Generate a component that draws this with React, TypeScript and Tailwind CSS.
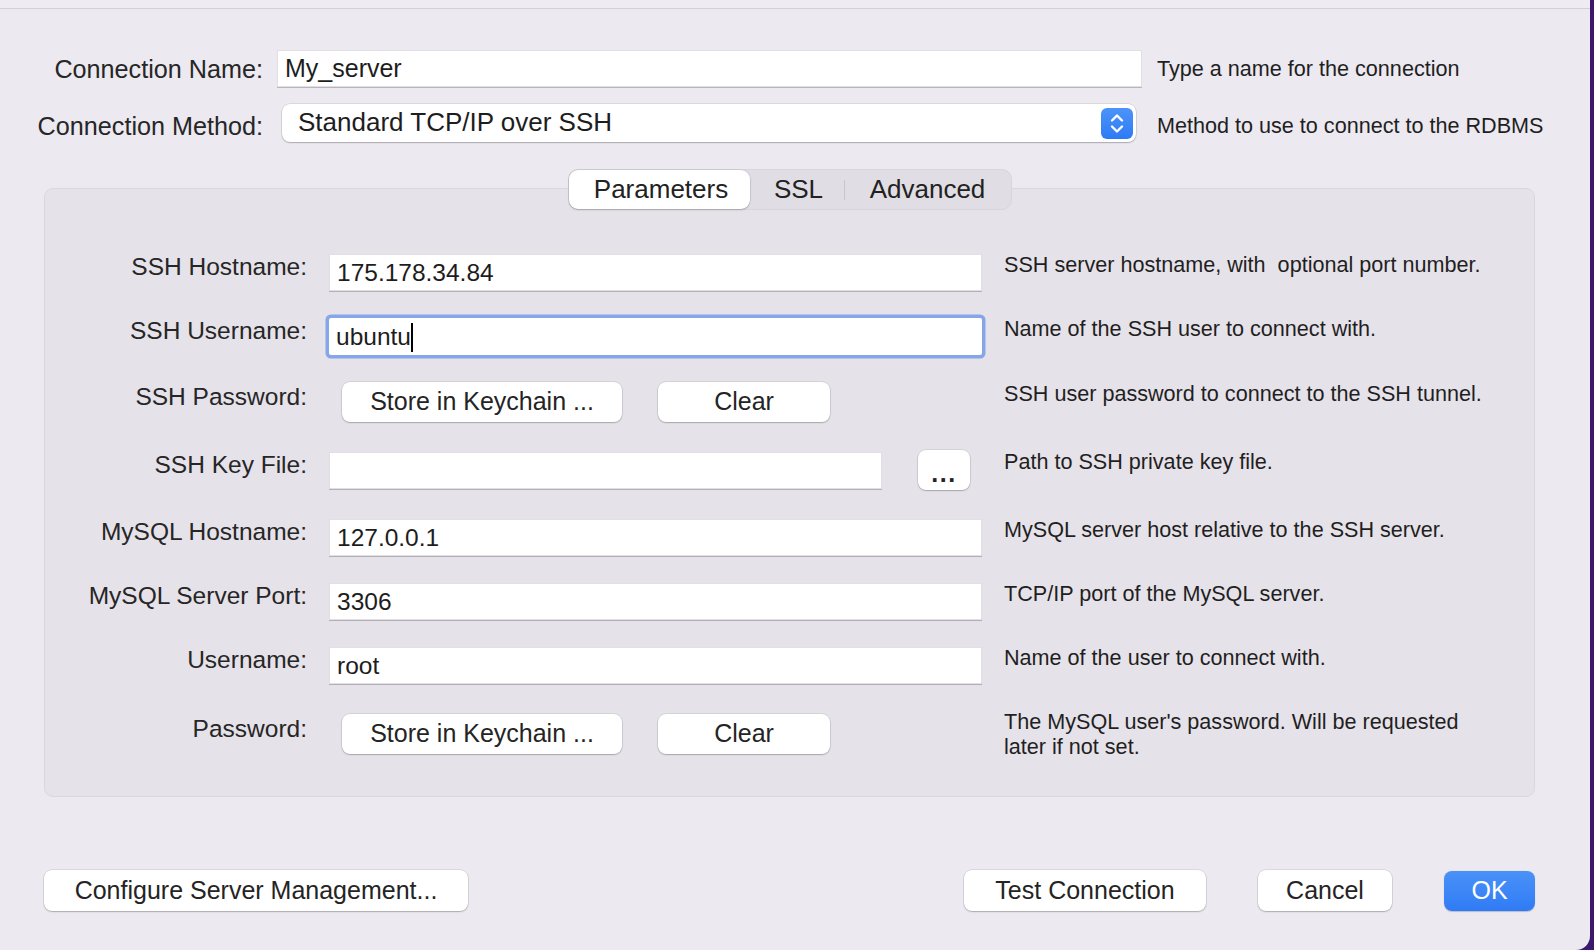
import React from "react"

type Row = {
  label: string
  kind: "input" | "focused" | "keychain" | "file"
  value?: string
  desc: string
  mt: string
  descClass?: string
}

const rows: Row[] = [
  { label: "SSH Hostname:", kind: "input", value: "175.178.34.84", desc: "SSH server hostname, with  optional port number.", mt: "mt-[42px]" },
  { label: "SSH Username:", kind: "focused", value: "ubuntu", desc: "Name of the SSH user to connect with.", mt: "mt-[24px]" },
  { label: "SSH Password:", kind: "keychain", desc: "SSH user password to connect to the SSH tunnel.", mt: "mt-[26px]", descClass: "-mt-[1px]" },
  { label: "SSH Key File:", kind: "file", value: "", desc: "Path to SSH private key file.", mt: "mt-[28px]", descClass: "-mt-[1px]" },
  { label: "MySQL Hostname:", kind: "input", value: "127.0.0.1", desc: "MySQL server host relative to the SSH server.", mt: "mt-[27px]" },
  { label: "MySQL Server Port:", kind: "input", value: "3306", desc: "TCP/IP port of the MySQL server.", mt: "mt-[24px]" },
  { label: "Username:", kind: "input", value: "root", desc: "Name of the user to connect with.", mt: "mt-[24px]" },
  { label: "Password:", kind: "keychain", desc: "The MySQL user's password. Will be requested\nlater if not set.", mt: "mt-[29px]", descClass: "-mt-[5px]" },
]

function MacButton({ children, className = "" }: { children: React.ReactNode; className?: string }) {
  return (
    <div
      className={`h-[40px] flex items-center justify-center rounded-[8px] bg-white text-[25px] text-[#242424] shadow-[0_0_0_0.5px_rgba(0,0,0,0.14),0_1px_1.5px_rgba(0,0,0,0.22)] ${className}`}
    >
      {children}
    </div>
  )
}

function TextBox({ value, className = "" }: { value?: string; className?: string }) {
  return (
    <div
      className={`h-[37px] flex items-center bg-white pl-[7px] pt-[2px] text-[24.5px] text-[#1d1d1d] border border-[#e1dee4] shadow-[0_1px_0.5px_rgba(0,0,0,0.22)] ${className}`}
    >
      {value}
    </div>
  )
}

function Control({ row }: { row: Row }) {
  if (row.kind === "input") return <TextBox value={row.value} className="w-[653px]" />
  if (row.kind === "focused")
    return (
      <div className="w-[653px] h-[37px] flex items-center bg-white pl-[7px] pt-[2px] text-[24.5px] text-[#1d1d1d] rounded-[2px] ring-[3.5px] ring-[#87a6e9]">
        {row.value}
        <span className="inline-block w-[2px] h-[29px] bg-black" />
      </div>
    )
  if (row.kind === "file")
    return (
      <div className="flex items-center gap-[36px]">
        <TextBox className="w-[553px]" />
        <MacButton className="w-[52px] text-[15px] font-bold tracking-[1.5px] pt-[8px]">...</MacButton>
      </div>
    )
  return (
    <div className="flex items-center gap-[36px] ml-[13px]">
      <MacButton className="w-[280px]">Store in Keychain ...</MacButton>
      <MacButton className="w-[172px]">Clear</MacButton>
    </div>
  )
}

export default function App() {
  return (
    <div className="w-[1594px] h-[950px] bg-[#3b1a6c] font-['Liberation_Sans',Arial,sans-serif]">
      <div className="w-[1590px] h-[950px] bg-[#ece9f0] rounded-br-[14px] flex flex-col">
        {/* title strip */}
        <div className="h-[9px] border-b border-[#d3d0d7] bg-[#eeebf2]" />

        {/* connection name */}
        <div className="mt-[41px] h-[36px] flex items-center">
          <div className="w-[263px] text-right text-[25.2px] text-[#262626] pt-[3px]">Connection Name:</div>
          <TextBox value="My_server" className="ml-[14px] w-[865px] h-[36px] text-[25px]" />
          <div className="ml-[15px] text-[21.6px] text-[#1f1f1f] pt-[2px]">Type a name for the connection</div>
        </div>

        {/* connection method */}
        <div className="mt-[18px] h-[38px] flex items-center">
          <div className="w-[263px] text-right text-[25.2px] text-[#262626] pt-[8px]">Connection Method:</div>
          <div className="ml-[19px] w-[854px] h-[38px] flex items-center justify-between rounded-[8px] bg-white pl-[16px] pr-[3px] shadow-[0_0_0_0.5px_rgba(0,0,0,0.14),0_1px_1.5px_rgba(0,0,0,0.22)]">
            <span className="text-[26px] text-[#1d1d1d] -mt-[1px]">Standard TCP/IP over SSH</span>
            <div className="w-[32px] h-[31px] rounded-[6px] bg-gradient-to-b from-[#4c94f9] to-[#2e7af5] flex items-center justify-center">
              <svg width="32" height="31" viewBox="0 0 32 31" fill="none">
                <path d="M11 12.5 L16 7.5 L21 12.5" stroke="white" strokeWidth="2.4" strokeLinecap="round" strokeLinejoin="round" />
                <path d="M11 18.5 L16 23.5 L21 18.5" stroke="white" strokeWidth="2.4" strokeLinecap="round" strokeLinejoin="round" />
              </svg>
            </div>
          </div>
          <div className="ml-[21px] text-[21.6px] text-[#1f1f1f] pt-[6px]">Method to use to connect to the RDBMS</div>
        </div>

        {/* parameters panel */}
        <div className="mt-[46px] ml-[44px] w-[1491px] h-[609px] rounded-[9px] border border-[#dbd7de] bg-[#e6e2e9] flex flex-col">
          <div className="-mt-[20px] self-center w-[444px] h-[41px] rounded-[10px] bg-[#e1dde4] border border-[#d9d5dc] flex items-center text-[26px] text-[#222]">
            <div className="w-[181px] h-[39px] rounded-[9px] bg-white shadow-[0_0_0_0.5px_rgba(0,0,0,0.1),0_1px_2px_rgba(0,0,0,0.2)] flex items-center justify-center pl-[4px]">
              Parameters
            </div>
            <div className="w-[94px] flex items-center justify-center pl-[4px]">SSL</div>
            <div className="w-[1px] h-[20px] bg-[#c9c5cc]" />
            <div className="flex-1 flex items-center justify-center">Advanced</div>
          </div>

          {rows.map((row) => (
            <div key={row.label + row.mt} className={`${row.mt} flex items-start`}>
              <div className="w-[262px] h-[40px] pb-[9px] flex items-center justify-end text-[24.5px] text-[#262626]">
                {row.label}
              </div>
              <div className="ml-[22px] w-[653px] h-[40px] flex items-center">
                <Control row={row} />
              </div>
              <div className={`ml-[22px] text-[21.6px] leading-[25px] text-[#1f1f1f] whitespace-pre ${row.descClass ?? ""}`}>
                {row.desc}
              </div>
            </div>
          ))}
        </div>

        {/* bottom buttons */}
        <div className="mt-[73px] ml-[44px] w-[1491px] flex items-center">
          <MacButton className="w-[424px] h-[41px]">Configure Server Management...</MacButton>
          <div className="flex-1" />
          <MacButton className="w-[242px] h-[41px]">Test Connection</MacButton>
          <MacButton className="ml-[52px] w-[134px] h-[41px]">Cancel</MacButton>
          <div className="ml-[52px] w-[91px] h-[40px] rounded-[8px] bg-gradient-to-b from-[#4a92f8] to-[#2f7bf5] flex items-center justify-center text-[25px] text-white shadow-[0_0.5px_1px_rgba(0,0,0,0.2)]">
            OK
          </div>
        </div>
      </div>
    </div>
  )
}
